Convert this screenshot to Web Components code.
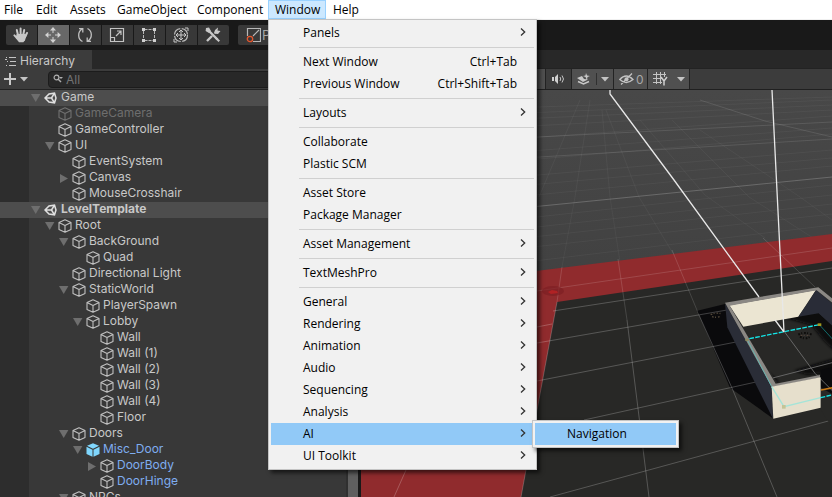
<!DOCTYPE html>
<html lang="en">
<head>
<meta charset="utf-8">
<title>Level editor</title>
<style>
html,body{height:100%}
body{margin:0;overflow:hidden;background:#191919;font:12px "Open Sans","Liberation Sans",sans-serif}
</style>
</head>
<body>
<editor-app></editor-app>
<script>
const define = (name, html, setup) => {
  const t = document.createElement('template');
  t.innerHTML = html;
  customElements.define(name, class extends HTMLElement {
    connectedCallback() {
      if (this.shadowRoot) return;
      const root = this.attachShadow({mode: 'open'});
      root.append(t.content.cloneNode(true));
      if (setup) setup(this, root);
    }
  });
};

const icons = {
  hand: [18, 16, '<g fill="none" stroke="#c8c8c8" stroke-width="2" stroke-linecap="round"><path d="M6 8 4.8 3M8.6 7V1.6M11.2 8l1-5M13 10l2-4M5 11 2.4 8.4"/></g><path fill="#c8c8c8" d="M4.6 7h8.6l1.4 1.5-1.6 4.7-1.6 2.1H7L3.6 11z"/>'],
  move: [16, 16, '<path fill="none" stroke="#d2d2d2" d="M8 6V2M8 10v4M6 8H2M10 8h4"/><path fill="#d2d2d2" d="M8 0l3 3.4H5zM8 16l3-3.4H5zM0 8l3.4-3v6zM16 8l-3.4-3v6z"/>'],
  rotate: [16, 16, '<path fill="none" stroke="#c0c0c0" stroke-width="1.3" d="M5.5 14.5C.5 12 .5 5 5 2M2 1.6h3.8V5.6M10.5 1.5C15.5 4 15.5 11 11 14M14 14.4h-3.8v-4"/>'],
  scale: [16, 16, '<path fill="none" stroke="#c4c4c4" stroke-width="1.2" d="M1.5 1.5h13v13h-13zM1.5 10.5h4v4M7 9l5-5M8 4h4v4"/>'],
  rect: [16, 16, '<path fill="none" stroke="#b5b5b5" stroke-dasharray="3 1" d="M3.500 2.500h9M3.500 13.500h9M2.500 4v8M13.500 4v8"/><path fill="#d0d0d0" d="M1 1h3v3H1zM12 1h3v3h-3zM1 12h3v3H1zM12 12h3v3h-3z"/>'],
  transform: [18, 18, '<circle cx="9" cy="9" r="6.500" fill="none" stroke="#bbb" stroke-width="1.200" stroke-dasharray="8.700 1.500"/><path fill="none" stroke="#c8c8c8" d="M9 4v10M4 9h10M7 6l2-2 2 2M7 12l2 2 2-2M6 7 4 9l2 2M12 7l2 2-2 2M13 2h3v3M5 16H2v-3"/>'],
  tools: [16, 16, '<path fill="none" stroke="#c8c8c8" stroke-width="2.400" d="M4.500 4.500l8 8M2 14l5-5M10 6l2-2"/><path fill="#c8c8c8" d="M1 1l3-.5L6 4 4 6 .6 4zM10 3l3-2.500-.5 3 3 .5-2.500 3-4-.5zM11 10l4 3.500-1.500 1.500L10 11.500z"/>'],
  pivot: [15, 16, '<path fill="none" stroke="#b8b8b8" stroke-width="1.200" d="M1.500 9V1.500h13v13H7M7 9l6-6"/><circle cx="4" cy="12" r="2.700" fill="none" stroke="#e4572e" stroke-width="1.300"/>'],
  list: [12, 10, '<path stroke="#c4c4c4" d="M4 1.500h7M5 5.500h6M4 9.500h7"/><path fill="#c4c4c4" d="M1 1h1v1H1zM0 3h2v1H0zM2 5h1v1H2zM1 9h1v1H1z"/>'],
  plus: [12, 12, '<path stroke="#c8c8c8" stroke-width="2" d="M6 0v12M0 6h12"/>'],
  down: [8, 5, '<path fill="#c4c4c4" d="M0 0h8L4 4.500z"/>'],
  find: [11, 10, '<circle cx="3.500" cy="3.500" r="2.400" fill="none" stroke="#b0b0b0" stroke-width="1.200"/><path stroke="#b0b0b0" stroke-width="1.400" d="M5.200 5.200 8 8"/><path fill="#b0b0b0" d="M6 3h4L8 5z"/>'],
  open: [10, 8, '<path fill="#6e6e6e" d="M0 0h9.400L4.700 8z"/>'],
  closed: [10, 9, '<path fill="#6e6e6e" d="M1 0v9l8-4.500z"/>'],
  cube: [14, 14, '<path fill="none" stroke="currentColor" stroke-width="1.100" stroke-linejoin="round" d="M7 .8l6 2.800v6.800l-6 2.900-6-2.900V3.600zM1 3.600l6 2.900 6-2.900M7 6.500v6.800"/>'],
  prefab: [14, 14, '<path fill="#7fd6fd" d="M7 .3l6 2.500-6 3-6-3zM.5 3.800 6.500 6.800v7L.5 11zM13.500 3.800l-6 3v7l6-2.800z"/>'],
  unity: [13, 12, '<path fill="none" stroke="#e0e0e0" stroke-width="1.500" d="M1 6 5 2l5.500-.8L12 6l-1.500 4.800L5 10zM1 6h6.500M7.500 6l3-4.800M7.500 6l3 4.800"/>'],
  chevron: [6, 8, '<path fill="none" stroke="#333" stroke-width="1.300" d="M1 .5 4.700 4 1 7.500"/>'],
  audio: [13, 10, '<path fill="#d0d0d0" d="M0 3h2v4H0zM3 3l3-3v10L3 7z"/><path fill="none" stroke="#c4c4c4" d="M8 3q1.500 2 0 4M10 1.500q3 3.500 0 7"/>'],
  effects: [14, 13, '<path fill="#c8c8c8" d="M0 5l5-2 2 3 4 .5L6 9zM9 0l1 2.500L13 3l-2.500 1L10 7 8.500 4 6 3l2.500-.5z"/><path fill="none" stroke="#c8c8c8" stroke-width="1.500" d="M1 8.500l5.500 2.500L12 8.500"/>'],
  eye: [15, 12, '<path fill="none" stroke="#c4c4c4" stroke-width="1.300" d="M.8 6.500Q7 -.5 14 6.500 7 12.500.8 6.500zM2 11.500 13 .5"/><circle cx="7.500" cy="6.300" r="2" fill="#c4c4c4"/>'],
  grid: [15, 14, '<path fill="none" stroke="#c4c4c4" d="M3.500 0v12M7.500 0v12M11.500 0v5M0 2.500h13M0 6.500h9M0 10.500h9"/><path fill="none" stroke="#d0d0d0" stroke-width="1.500" d="M8 5l3 4 3-4M11 9v4.500"/>']
};

define('ed-icon', `<style>:host{display:inline-flex;flex:none}svg{display:block}</style><svg aria-hidden="true"></svg>`, (el, root) => {
  const [w, h, body] = icons[el.getAttribute('name')], s = root.querySelector('svg');
  s.setAttribute('width', w); s.setAttribute('height', h);
  s.setAttribute('viewBox', `0 0 ${w} ${h}`);
  s.innerHTML = body;
});

define('popup-item', `<style>
:host{display:block}
button{all:unset;box-sizing:border-box;width:100%;height:22px;padding:0 8px 2px 32px;display:flex;align-items:center;gap:3px;color:#000;white-space:nowrap}
.label{flex:1}
.end{width:6px;display:flex}
:host([active]) button{background:#91c9f7}
</style><button role="menuitem"><span class="label"><slot></slot></span><span class="key"></span><span class="end"></span></button>`, (el, root) => {
  root.querySelector('.key').textContent = el.getAttribute('key') || '';
  if (el.hasAttribute('more')) root.querySelector('.end').innerHTML = '<ed-icon name="chevron"></ed-icon>';
});

define('popup-rule', `<style>:host{display:block;padding:3px 0 3px 28px}hr{margin:0;border:0;height:1px;background:#d0d0d0}</style><hr>`);

define('popup-menu', `<style>
:host{display:block;box-sizing:border-box;padding:2px;background:#f1f1f1;border:1px solid #c4c4c4;box-shadow:3px 3px 4px rgba(0,0,0,.6)}
</style><div role="menu"><slot></slot></div>`);

define('window-menu', `<style>
:host{position:absolute;top:19px;left:0;width:269px;z-index:2}
.sub{position:relative}
.sub>popup-menu{position:absolute;left:261px;top:-3px;width:147px}
</style>
<popup-menu>
<popup-item more>Panels</popup-item><popup-rule></popup-rule>
<popup-item key="Ctrl+Tab">Next Window</popup-item>
<popup-item key="Ctrl+Shift+Tab">Previous Window</popup-item><popup-rule></popup-rule>
<popup-item more>Layouts</popup-item><popup-rule></popup-rule>
<popup-item>Collaborate</popup-item><popup-item>Plastic SCM</popup-item><popup-rule></popup-rule>
<popup-item>Asset Store</popup-item><popup-item>Package Manager</popup-item><popup-rule></popup-rule>
<popup-item more>Asset Management</popup-item><popup-rule></popup-rule>
<popup-item more>TextMeshPro</popup-item><popup-rule></popup-rule>
<popup-item more>General</popup-item><popup-item more>Rendering</popup-item>
<popup-item more>Animation</popup-item><popup-item more>Audio</popup-item>
<popup-item more>Sequencing</popup-item><popup-item more>Analysis</popup-item>
<div class="sub"><popup-item active more>AI</popup-item><popup-menu><popup-item active>Navigation</popup-item></popup-menu></div>
<popup-item more>UI Toolkit</popup-item>
</popup-menu>`);

define('menu-bar', `<style>
:host{display:block;background:#fff;border-bottom:1px solid #f0f0f0}
nav{display:flex;height:19px}
.slot{position:relative;flex:0 0 var(--w)}
button{all:unset;box-sizing:border-box;display:block;width:100%;height:19px;padding-left:7px;line-height:19px;color:#000;white-space:nowrap}
.slot:first-child button{padding-left:4px}
.open button{background:#cce8ff;border:1px solid #99d1ff;padding-left:6px;line-height:17px}
</style><nav aria-label="Main menu">
<div class="slot" style="--w:29px"><button>File</button></div>
<div class="slot" style="--w:34px"><button>Edit</button></div>
<div class="slot" style="--w:47px"><button>Assets</button></div>
<div class="slot" style="--w:80px"><button>GameObject</button></div>
<div class="slot" style="--w:78px"><button>Component</button></div>
<div class="slot open" style="--w:58px"><button aria-expanded="true">Window</button><window-menu></window-menu></div>
<div class="slot" style="--w:44px"><button>Help</button></div>
</nav>`);

define('tool-bar', `<style>
:host{display:flex;gap:9px;padding:5px 6px;background:#191919}
div{display:flex;gap:1px}
button{all:unset;box-sizing:border-box;width:31px;height:20px;padding-right:2px;background:#383838;display:flex;align-items:center;justify-content:center}
button.on{background:#686868}
button.first{border-radius:2px 0 0 2px}
button.last{border-radius:0 2px 2px 0}
button.wide{width:64px;justify-content:flex-start;padding-left:8px;gap:1px;color:#a8a8a8;font:13px Inter,sans-serif;border-radius:2px}
</style><div>
<button class="first" aria-label="Hand"><ed-icon name="hand"></ed-icon></button>
<button class="on" aria-label="Move"><ed-icon name="move"></ed-icon></button>
<button aria-label="Rotate"><ed-icon name="rotate"></ed-icon></button>
<button aria-label="Scale"><ed-icon name="scale"></ed-icon></button>
<button aria-label="Rect"><ed-icon name="rect"></ed-icon></button>
<button aria-label="Transform"><ed-icon name="transform"></ed-icon></button>
<button class="last" aria-label="Custom tools"><ed-icon name="tools"></ed-icon></button>
</div><button class="wide"><ed-icon name="pivot"></ed-icon>Pivot</button>`);

define('tree-row', `<style>
:host{display:flex;align-items:center;height:16px;padding-left:calc(31px + 14px*var(--d));color:#c8c8c8;white-space:nowrap;
background:linear-gradient(90deg,#2d2d2d 29px,#383838 29px)}
:host([kind=scene]){background:#4d4d4d}
:host([bold]){font-weight:700}
:host([dim]){color:#6e6e6e}
:host([link]){color:#7fadf0}
.arrow{width:13px;display:flex}
.icon{width:17px;display:flex;color:#c0c0c0}
.label{line-height:14px;padding-bottom:2px}
:host([dim]) .icon{color:#707070}
</style><span class="arrow"></span><span class="icon"></span><span class="label"><slot></slot></span>`, (el, root) => {
  const a = el.getAttribute('arrow');
  if (a) root.querySelector('.arrow').innerHTML = `<ed-icon name="${a}"></ed-icon>`;
  const k = {scene: 'unity', prefab: 'prefab'}[el.getAttribute('kind')] || 'cube';
  root.querySelector('.icon').innerHTML = `<ed-icon name="${k}"></ed-icon>`;
});

const rows = [
  [0, 'Game', 'open', 'kind=scene'], [1, 'GameCamera', '', 'dim'], [1, 'GameController'], [1, 'UI', 'open'],
  [2, 'EventSystem'], [2, 'Canvas', 'closed'], [2, 'MouseCrosshair'],
  [0, 'LevelTemplate', 'open', 'kind=scene bold'], [1, 'Root', 'open'], [2, 'BackGround', 'open'], [3, 'Quad'],
  [2, 'Directional Light'], [2, 'StaticWorld', 'open'], [3, 'PlayerSpawn'], [3, 'Lobby', 'open'],
  [4, 'Wall'], [4, 'Wall (1)'], [4, 'Wall (2)'], [4, 'Wall (3)'], [4, 'Wall (4)'], [4, 'Floor'],
  [2, 'Doors', 'open'], [3, 'Misc_Door', 'open', 'kind=prefab link'],
  [4, 'DoorBody', 'closed', 'link'], [4, 'DoorHinge', '', 'link'], [2, 'NPCs', 'open']
];

define('hierarchy-panel', `<style>
:host{display:flex;flex-direction:column;min-height:0;overflow:hidden;background:#383838;color:#c8c8c8;font:12px Inter,"Liberation Sans",sans-serif}
.tabs{flex:none;display:flex;height:19px;background:#282828}
.tab{display:flex;align-items:center;gap:3px;padding:2px 17px 0 5px;background:#3c3c3c}
.tools{flex:none;display:flex;align-items:center;box-sizing:border-box;height:21px;padding:0 8px 0 4px;background:#3c3c3c;border-bottom:1px solid #232323}
.add{all:unset;display:flex;align-items:center;gap:4px;width:44px}
label{flex:1;display:flex;align-items:center;gap:2px;box-sizing:border-box;height:17px;padding-left:4px;background:#282828;border:1px solid #1c1c1c;border-radius:4px}
input{all:unset;flex:1;min-width:0;font:12px Inter,sans-serif;color:#c8c8c8}
input::placeholder{color:#747474}
.body{flex:1;min-height:0;display:flex;overflow:hidden}
.tree{flex:1;overflow:hidden}
.bar{flex:none;width:10px;background:#5f5f5f;border-left:2px solid #303030}
</style>
<div class="tabs"><div class="tab"><ed-icon name="list"></ed-icon><span>Hierarchy</span></div></div>
<div class="tools"><button class="add" aria-label="Create"><ed-icon name="plus"></ed-icon><ed-icon name="down"></ed-icon></button>
<label><ed-icon name="find"></ed-icon><input placeholder="All" aria-label="Search"></label></div>
<div class="body"><div class="tree"></div><div class="bar"></div></div>`, (el, root) => {
  root.querySelector('.tree').innerHTML = rows.map(([d, t, a = '', x = '']) =>
    `<tree-row style="--d:${d}" arrow="${a}" ${x}>${t}</tree-row>`).join('');
});

define('scene-view', `<style>
:host{display:flex;flex-direction:column;min-width:0;min-height:0;background:#444;color:#a8a8a8;font:12px Inter,sans-serif}
.strip{flex:none;height:18px;background:#282828;border-bottom:1px solid #232323}
.tools{flex:none;display:flex;height:20px;background:#3c3c3c;border-bottom:1px solid #202020}
.left{flex:0 0 184px;background:#505050}
button{all:unset;box-sizing:border-box;height:20px;display:flex;align-items:center;border-left:1px solid #232323;background:#505050;padding:0 4px 0 5px}
button.off{background:#3c3c3c;width:26px;padding-left:6px}
button.drop{width:42px}
button.count{width:34px;padding-right:0;gap:2px}
button.end{width:43px;border-right:1px solid #232323}
i{width:1px;height:12px;margin:0 4px 0 5px;background:#303030}
svg{display:block;flex:1;min-height:0;width:100%}
</style>
<div class="strip"></div>
<div class="tools"><div class="left"></div>
<button class="off" aria-label="Audio"><ed-icon name="audio"></ed-icon></button>
<button class="drop" aria-label="Effects"><ed-icon name="effects"></ed-icon><i></i><ed-icon name="down"></ed-icon></button>
<button class="count" aria-label="Hidden objects 0"><ed-icon name="eye"></ed-icon><span>0</span></button>
<button class="drop end" aria-label="Grid"><ed-icon name="grid"></ed-icon><i></i><ed-icon name="down"></ed-icon></button></div>
<svg viewBox="361 90 471 407" preserveAspectRatio="xMinYMin slice" role="img" aria-label="Scene">
<defs><linearGradient id="fade" x1="0" y1="0" x2="0" y2="1"><stop offset="0" stop-color="#484848"/><stop offset="1" stop-color="#414141"/></linearGradient>
<filter id="soft"><feGaussianBlur stdDeviation="4"/></filter>
<clipPath id="inside"><path d="M160 140 325 106l60-8 45 40v190l-40-10v-36l-128 28z"/></clipPath></defs>
<path fill="url(#fade)" d="M361 90h471v200H361z"/>
<g fill="none" stroke="#fff" stroke-opacity=".045">
<path d="M361 113 832 97M361 120l471-20M361 126 832 105M361 135 832 110M361 150 832 116M361 164 832 128M361 174 832 134M361 190 832 150M361 200 832 158M361 212 832 166M361 236 832 185M361 246 832 195M361 256 832 204M361 266 832 214M361 282 832 225"/>
<path d="M580 100 539 197M590 100 575 197 562 267M602 110 610 197 620 262M606 110 639 197 674 255M640 120 705 195 765 238M672 120 749 197 832 250M700 130 800 197 832 220"/></g>
<path stroke="#fff" stroke-opacity=".11" fill="none" d="M361 146 832 122M361 168 832 139M700 100 765 121 832 137"/>
<path stroke="#fff" stroke-opacity=".2" fill="none" d="M361 224 832 177"/>
<path fill="#902b2d" d="M361 293 832 234V497H361z"/>
<path fill="#282826" d="M557 302 832 261V497H521z"/>
<path fill="none" stroke="#fff" stroke-opacity=".14" d="M537 291 832 248M562 267l-5 35M618 259l9 61M672 250l27 65M763 238l52 49"/>
<g transform="translate(690 280) scale(.3333)"><path fill="#0a0a0c" d="M22 92 105 72l60 110 83 233-128-92z"/></g>
<path fill="none" stroke="#fff" stroke-opacity=".22" d="M406 470 394 497M557 302 521 497M537 327l15-3M553 311 832 268M537 343 727 310M537 381 736 342M584 420 765 380M550 497 832 420M627 320 649 497M699 315 732 388 777 497"/>
<ellipse cx="553" cy="291" rx="11" ry="5" fill="#7d2024" opacity=".7"/><path fill="#b02224" d="M548 292l4-2 5 1 1 2-7 1z"/>
<g transform="translate(690 280) scale(.3333)">
<path fill="#282826" d="M160 140 325 106l60-8 45 40v310l-40-62V284l-128 26z"/>
<g clip-path="url(#inside)"><path fill="#08080a" filter="url(#soft)" d="M280 112 385 88l65 40v100l-50-48-35-44zM312 272l140-42v120l-62-20V280l-38 4zM236 278l30 26-20 10z"/></g>
<path fill="#0a0a0c" d="M392 270l38-10v84l-38-22z"/>
<path fill="none" stroke="#666" stroke-width="3" d="M284 156 375 280l55 55M248 294 430 247"/>
<path fill="#ebe5d2" d="M118 76 378 30 325 110 160 140z"/>
<path fill="#292c37" d="M378 30 430 74v66L386 100l-61 10 28-40z"/>
<path fill="#2a2d37" d="M105 70 245 318l4 98L112 142z"/>
<path fill="#8b8884" d="M105 68 385 22l45 36v13L380 31 119 77 257 311l133-26v8L246 322z"/>
<path fill="#e6dfcc" d="M245 320l147-28v91l-142 33z"/>
<g fill="none" stroke-width="3"><path stroke="#14e6e8" stroke-width="4" stroke-dasharray="14 4" d="M178 176 388 134"/><path stroke="#126b6c" d="M388 134l42 46"/>
<path stroke="#66b5b0" d="M172 180 245 320"/><path stroke="#a5e4d8" stroke-width="4" d="M245 320l37 60 110-27"/><path stroke="#14e6e8" stroke-width="4" stroke-dasharray="14 4" d="M392 353l38-9"/>
<path stroke="#c87a18" stroke-width="5" d="M393 330l37-7"/></g>
<path fill="#a39a22" d="M383 130h11v8h-11z"/><path fill="#c4c497" d="M276 375h11v11h-11z"/><path fill="#8d8c60" d="M166 176h9v7h-9z"/>
<g fill="none" stroke="#54493a" stroke-width="4" stroke-dasharray="5 4 3 6"><path d="M62 104q18-8 34-2M66 110q14 4 26-1"/><path stroke="#0d0c0a" stroke-width="6" d="M325 164q20-10 40 0M330 170q17 10 30 0"/><path stroke="#5b4a3e" stroke-width="3" d="M332 166h28"/></g>
</g>
<path fill="none" stroke="#e8e8e8" stroke-width="1.300" d="M610 90v4L674 180 759 297M775 320l9 12M772 90 784 332"/>
</svg>`);

define('editor-app', `<style>
:host{display:grid;grid-template-rows:auto auto minmax(0,1fr);height:100vh}
main{display:grid;grid-template-columns:358px minmax(0,1fr);column-gap:3px;min-height:0}
menu-bar{position:relative;z-index:3}
</style>
<menu-bar></menu-bar><tool-bar></tool-bar>
<main><hierarchy-panel></hierarchy-panel><scene-view></scene-view></main>`);
</script>
</body>
</html>
